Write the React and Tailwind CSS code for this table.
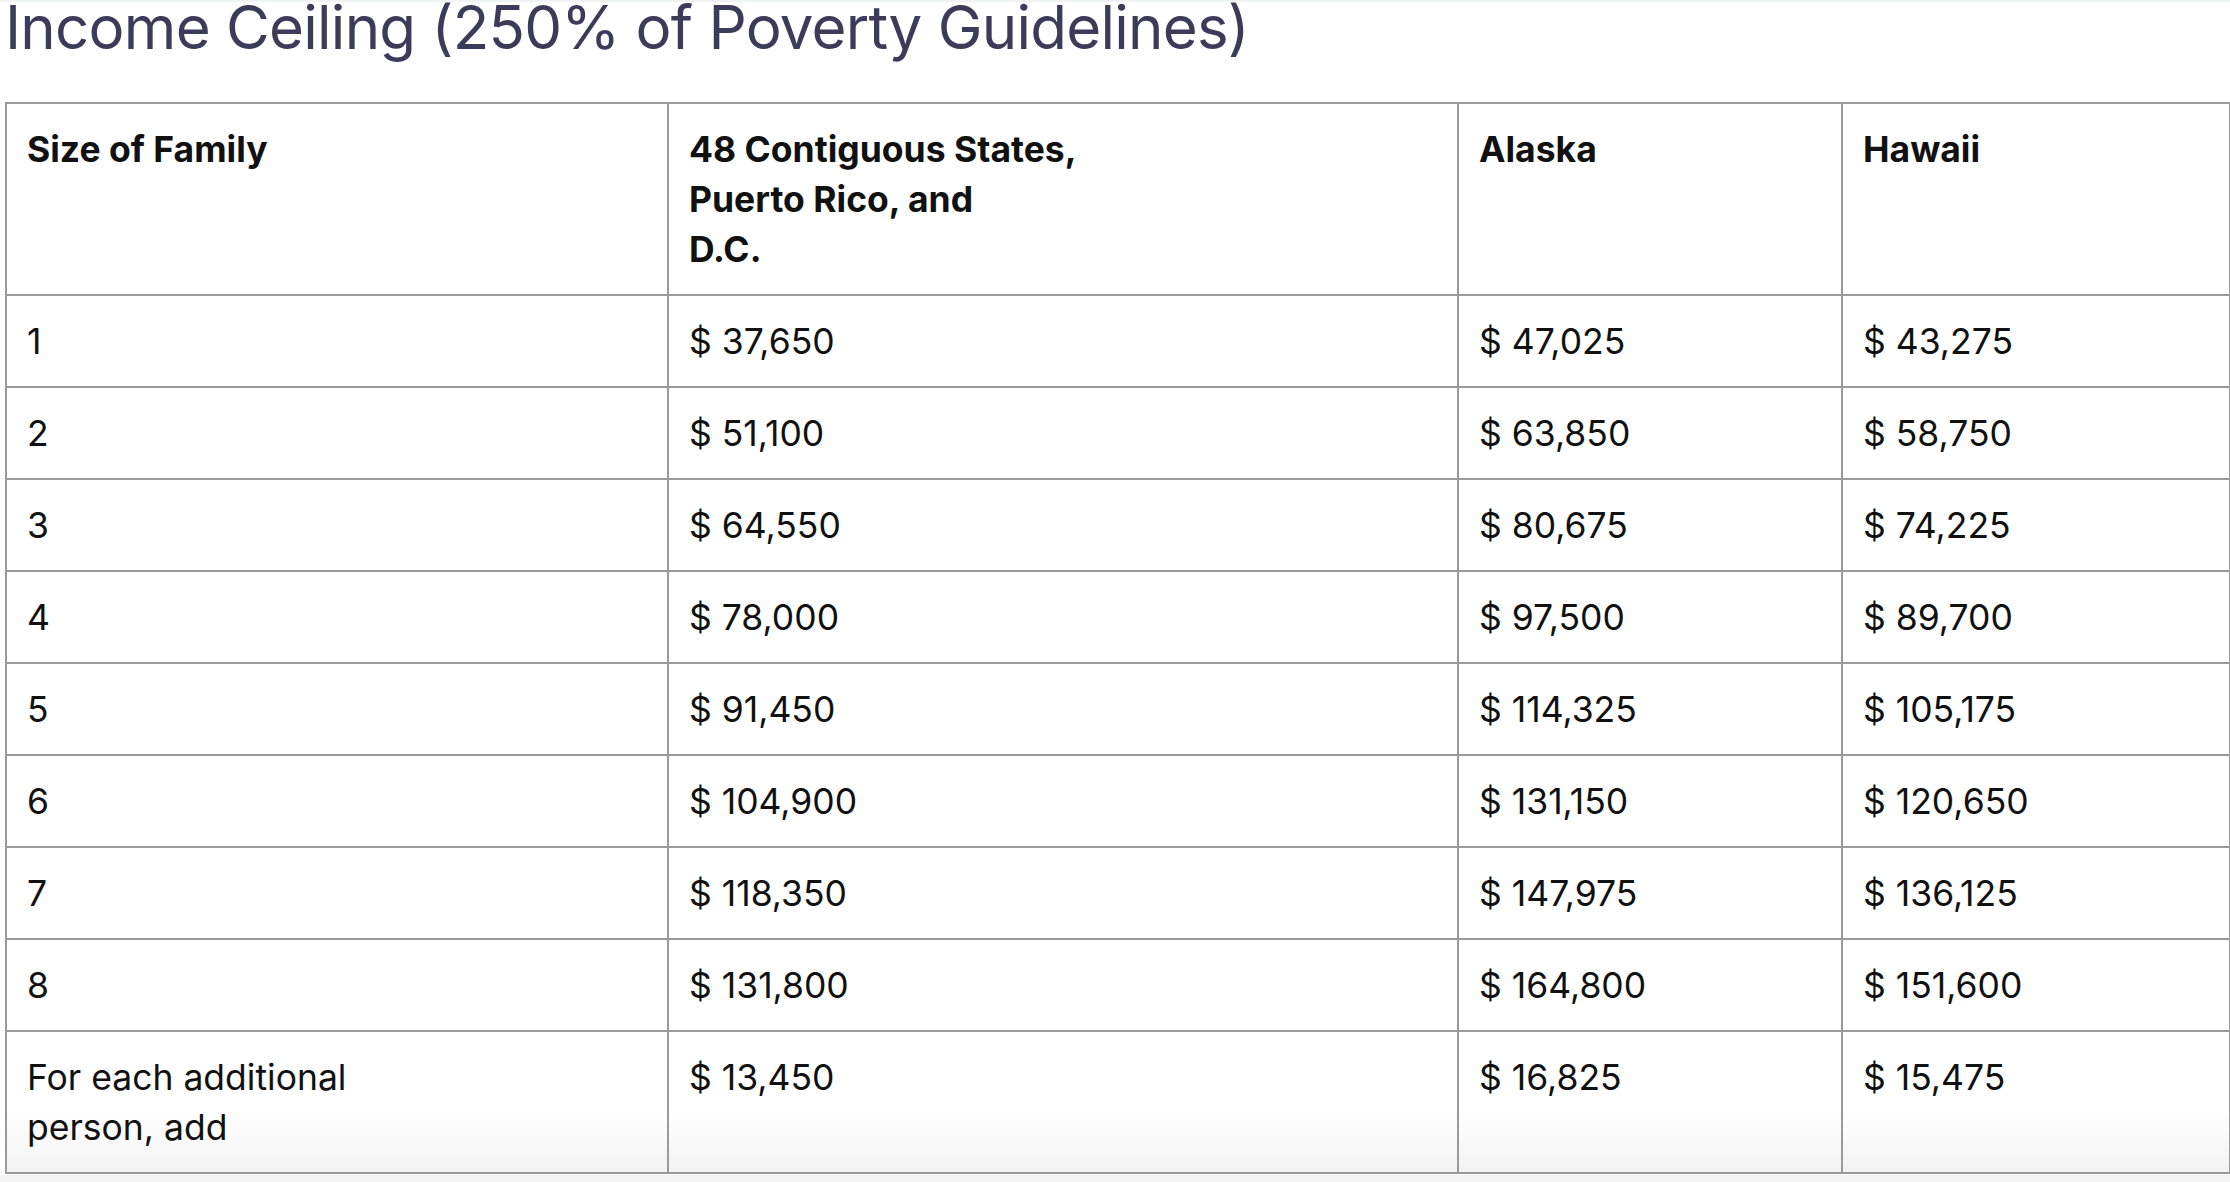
import React from 'react'

const rows = [
  ['1', '$ 37,650', '$ 47,025', '$ 43,275'],
  ['2', '$ 51,100', '$ 63,850', '$ 58,750'],
  ['3', '$ 64,550', '$ 80,675', '$ 74,225'],
  ['4', '$ 78,000', '$ 97,500', '$ 89,700'],
  ['5', '$ 91,450', '$ 114,325', '$ 105,175'],
  ['6', '$ 104,900', '$ 131,150', '$ 120,650'],
  ['7', '$ 118,350', '$ 147,975', '$ 136,125'],
  ['8', '$ 131,800', '$ 164,800', '$ 151,600'],
]

const cell = 'border-2 border-[#9a9a9a] px-[20px] pt-[21px] pb-[19px] align-top text-left'
const last = `${cell} bg-linear-to-b from-white from-55% to-[#f3f3f3]`

export default function App() {
  return (
    <div className="w-[2230px] h-[1182px] overflow-hidden bg-[#f3f3f3] font-['Inter',sans-serif] border-t-2 border-[#eef4f4]">
      <div className="bg-white pb-[1px]">
        <h1 className="mt-[-5px] ml-[5px] text-[60px] leading-[61px] font-normal text-[#3b3c5a] tracking-[-0.75px]">
          Income Ceiling (250% of Poverty Guidelines)
        </h1>

        <table className="mt-[44px] ml-[5px] w-[2224px] table-fixed border-collapse text-[35.5px] leading-[50px] text-[#111111]">
          <colgroup>
            <col className="w-[662px]" />
            <col className="w-[790px]" />
            <col className="w-[384px]" />
            <col className="w-[388px]" />
          </colgroup>
          <thead>
            <tr>
              <th className={`${cell} font-bold`}>Size of Family</th>
              <th className={`${cell} font-bold`}>
                48 Contiguous States,
                <br />
                Puerto Rico, and
                <br />
                D.C.
              </th>
              <th className={`${cell} font-bold`}>Alaska</th>
              <th className={`${cell} font-bold`}>Hawaii</th>
            </tr>
          </thead>
          <tbody>
            {rows.map((r, i) => (
              <tr key={i}>
                <td className={cell}>{r[0]}</td>
                <td className={cell}>{r[1]}</td>
                <td className={cell}>{r[2]}</td>
                <td className={cell}>{r[3]}</td>
              </tr>
            ))}
            <tr>
              <td className={last}>
                For each additional
                <br />
                person, add
              </td>
              <td className={last}>$ 13,450</td>
              <td className={last}>$ 16,825</td>
              <td className={last}>$ 15,475</td>
            </tr>
          </tbody>
        </table>
      </div>
    </div>
  )
}
